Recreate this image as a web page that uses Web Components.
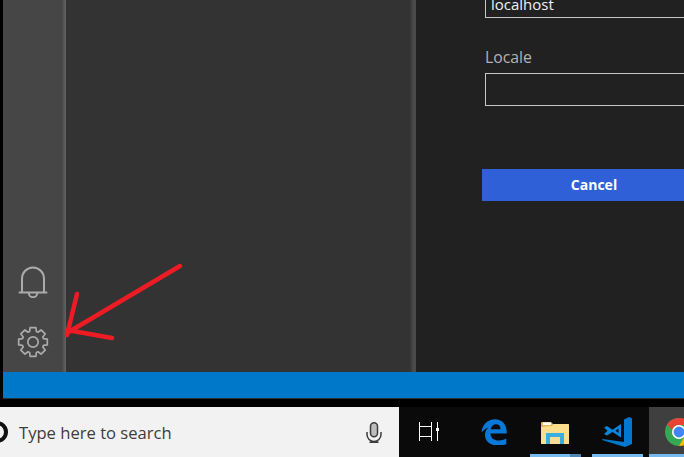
<!DOCTYPE html>
<html>
<head>
<meta charset="utf-8">
<style>
  html, body { margin: 0; height: 100%; background: #000; overflow: hidden; }
  body { font-family: "Open Sans", "Liberation Sans", sans-serif; }
</style>
</head>
<body>
<desktop-shot>
  <editor-window>
    <activity-bar>
      <bar-icon kind="bell"></bar-icon>
      <bar-icon kind="gear"></bar-icon>
    </activity-bar>
    <side-panel></side-panel>
    <settings-form>
      <form-field value="localhost"></form-field>
      <form-field label="Locale"></form-field>
      <form-button>Cancel</form-button>
    </settings-form>
  </editor-window>
  <win-taskbar>
    <task-icon kind="view"></task-icon>
    <task-icon kind="edge"></task-icon>
    <task-icon kind="folder" state="running"></task-icon>
    <task-icon kind="code" state="open"></task-icon>
    <task-icon kind="chrome" state="active"></task-icon>
  </win-taskbar>
  <red-arrow></red-arrow>
</desktop-shot>

<script>
const gearPath = () => {
  // 8 teeth, drawn around 0,0
  let pts = [];
  for (let i = 0; i < 8; i++) {
    let a = (i * Math.PI) / 4;
    [[-0.31, 11], [-0.2, 14.6], [0.2, 14.6], [0.31, 11]].forEach(([da, r]) => {
      pts.push((r * Math.sin(a + da)).toFixed(2) + " " + (-r * Math.cos(a + da)).toFixed(2));
    });
  }
  return "M" + pts.join("L") + "Z";
};

const icons = {
  bell: `<svg width="30" height="32" viewBox="0 0 30 32" fill="none" stroke="#ababab" stroke-width="2">
      <path d="M4 26V12.5a11 11 0 0 1 22 0V26"/>
      <path d="M1.5 26.5h27" stroke-linecap="round"/>
      <path d="M10.8 27a4.2 4.2 0 0 0 8.4 0"/>
    </svg>`,
  gear: `<svg width="32" height="32" viewBox="-16 -16 32 32" fill="none" stroke="#ababab" stroke-width="1.7" stroke-linejoin="round">
      <path d="${gearPath()}"/>
      <circle r="5.2"/>
    </svg>`,
  view: `<svg width="21" height="20" viewBox="0 0 21 20" fill="none" stroke="#fff" stroke-width="1">
      <path d="M.5 0v19M12.5 0v19M.5 4.5h12M.5 14.5h12"/>
      <path d="M18.5 0v19"/>
      <rect x="17" y="6" width="3" height="3" fill="#fff" stroke="none"/>
    </svg>`,
  edge: `<svg width="26" height="26" viewBox="0 0 26 26">
      <path fill="#0a78d7" d="M.5 13.5C1.2 5.5 7 .3 14 .3c7.2 0 12 5.2 11.8 14.2H9.500c.3 5 4 7 8.200 7 3 0 5.400-.7 7.600-2v5.400c-2.400 1.200-5 1.700-8.200 1.700C9 26.600 3.800 22 4 15.700c0-3 1.300-5.400 3.700-7.400-3 1.300-5.400 3.200-7.200 5.200zM9.700 10.200h9.800c0-3.200-1.700-5-4.500-5-2.800 0-4.800 2-5.300 5z"/>
    </svg>`,
  folder: `<svg width="28" height="23" viewBox="0 0 28 23">
      <path fill="#e3b95a" d="M0 2a1 1 0 0 1 1-1h9l2 2h15a1 1 0 0 1 1 1v18a1 1 0 0 1-1 1H1a1 1 0 0 1-1-1z"/>
      <path fill="#fcdf8c" d="M0 6l11-1 2-2h14a1 1 0 0 1 1 1v18a1 1 0 0 1-1 1H1a1 1 0 0 1-1-1z"/>
      <rect x="2" y="1.5" width="8" height="2.5" fill="#fff"/>
      <path fill="#3baee0" d="M5 12h18v11h-4v-7H9v7H5z"/>
      <rect x="9" y="16" width="10" height="7" fill="#f6dc95"/>
    </svg>`,
  code: `<svg width="30" height="30" viewBox="0 0 30 30">
      <path fill="#0078cf" d="M22 2.500L27 0l3 1.500V27l-7 3L0 23l.5-1L22 25z"/>
      <path fill="#0a84dc" fill-rule="evenodd" d="M2 10.500L5 9l5.500 3.800L19 7v13.500L10.500 15 5 18.500 2 17l3.500-3.200zM13.500 13.800l3 2.200v-4.500z"/>
    </svg>`,
  chrome: `<svg width="28" height="28" viewBox="0 0 36 36">
      <circle cx="18" cy="18" r="18" fill="#34a853"/>
      <path fill="#ea4335" d="M18 0a18 18 0 0 1 15.600 9H18a9 9 0 0 0-8.700 6.800L2.700 8.500A18 18 0 0 1 18 0z"/>
      <path fill="#fbbc05" d="M33.600 9A18 18 0 0 1 18 36l7.800-13.500A9 9 0 0 0 26 9z"/>
      <circle cx="18" cy="18" r="9" fill="#fff"/>
      <circle cx="18" cy="18" r="7" fill="#4285f4"/>
    </svg>`
};

class DesktopShot extends HTMLElement {
  constructor() {
    super();
    this.attachShadow({ mode: "open" }).innerHTML = `
      <style>
        :host { display: flex; flex-direction: column; position: relative; width: 684px; height: 457px; overflow: hidden; background: #000; }
      </style>
      <slot></slot>`;
  }
}

class EditorWindow extends HTMLElement {
  constructor() {
    super();
    this.attachShadow({ mode: "open" }).innerHTML = `
      <style>
        :host { display: flex; flex-direction: column; height: 399px; margin-left: 3px; margin-bottom: 8px; background: #212121; flex: none; }
        .main { display: flex; height: 372px; overflow: hidden; }
        .status { height: 26px; background: #0078c9; border-bottom: 1px solid #23303a; }
      </style>
      <div class="main"><slot></slot></div>
      <div class="status"></div>`;
  }
}

class ActivityBar extends HTMLElement {
  constructor() {
    super();
    this.attachShadow({ mode: "open" }).innerHTML = `
      <style>
        :host {
          display: flex; flex-direction: column; justify-content: flex-end; align-items: center;
          box-sizing: border-box; flex: none; width: 63px; height: 372px;
          padding-right: 3px; padding-bottom: 14px; gap: 28px;
          background: linear-gradient(90deg, #464646 0, #464646 59px, #505050 60px, #5c5c5c 62px, #646464 63px);
        }
      </style>
      <slot></slot>`;
  }
}

class BarIcon extends HTMLElement {
  constructor() {
    super();
    this.attachShadow({ mode: "open" }).innerHTML = `
      <style>
        :host { display: flex; width: 32px; height: 32px; justify-content: center; align-items: center; }
        svg { display: block; }
      </style>
      ${icons[this.getAttribute("kind")]}`;
  }
}

class SidePanel extends HTMLElement {
  constructor() {
    super();
    this.attachShadow({ mode: "open" }).innerHTML = `
      <style>
        :host {
          display: block; flex: none; width: 350px; height: 372px;
          background: linear-gradient(90deg, #333 0, #333 343px, #3a3a3a 345px, #4a4a4a 347px, #4a4a4a 350px);
        }
      </style>`;
  }
}

class SettingsForm extends HTMLElement {
  constructor() {
    super();
    this.attachShadow({ mode: "open" }).innerHTML = `
      <style>
        :host {
          display: flex; flex-direction: column; flex: 1; min-width: 0; overflow: hidden;
          height: 372px; box-sizing: border-box; padding-left: 69px; background: #212121;
        }
        .inner { display: flex; flex-direction: column; width: 220px; margin-top: -15px; }
        ::slotted(form-field) { margin-bottom: 29px; }
        ::slotted(form-button) { margin-top: 34px; margin-left: -3px; }
      </style>
      <div class="inner"><slot></slot></div>`;
  }
}

class FormField extends HTMLElement {
  constructor() {
    super();
    let label = this.getAttribute("label");
    this.attachShadow({ mode: "open" }).innerHTML = `
      <style>
        :host { display: block; }
        label { display: block; color: #b3b3b3; font-size: 15.8px; line-height: 20px; margin-bottom: 6px; }
        .box {
          box-sizing: border-box; height: 33px; width: 220px; padding: 0 5px;
          border: 1px solid #c8c8c8; color: #f0f0f0; font-size: 15px; line-height: 36px; white-space: nowrap;
          overflow: hidden;
        }
      </style>
      ${label ? `<label>${label}</label>` : ""}
      <div class="box">${this.getAttribute("value") || ""}</div>`;
  }
}

class FormButton extends HTMLElement {
  constructor() {
    super();
    this.attachShadow({ mode: "open" }).innerHTML = `
      <style>
        :host {
          display: block; box-sizing: border-box; width: 224px; height: 32px;
          background: #2f60d8; color: #fff; font-size: 14px; font-weight: 700;
          line-height: 32px; text-align: center;
        }
      </style>
      <slot></slot>`;
  }
}

class WinTaskbar extends HTMLElement {
  constructor() {
    super();
    this.attachShadow({ mode: "open" }).innerHTML = `
      <style>
        :host { display: flex; flex: none; height: 50px; background: #0a0a0a; }
        .search {
          display: flex; align-items: center; box-sizing: border-box; flex: none; width: 399px;
          background: #f2f2f2; color: #3c3c3c; font-size: 16.6px; overflow: hidden;
        }
        .ring {
          flex: none; box-sizing: border-box; width: 22px; height: 22px; margin-left: -14px; margin-right: 11px;
          border: 4px solid #111; border-radius: 50%;
        }
        .text { flex: 1; }
        .mic { flex: none; margin-right: 17px; display: block; }
        .icons { display: flex; flex: 1; min-width: 0; }
      </style>
      <div class="search">
        <div class="ring"></div>
        <span class="text">Type here to search</span>
        <svg class="mic" width="16" height="21" viewBox="0 0 16 21" fill="none" stroke="#3c3c3c" stroke-width="1.5">
          <rect x="4.5" y=".8" width="7" height="14" rx="3.5" fill="#bdbdbd"/>
          <path d="M1 10v2.500a7 7 0 0 0 14 0V10M8 19.500V20M3.500 20.200h9"/>
        </svg>
      </div>
      <div class="icons"><slot></slot></div>`;
  }
}

// widths and left padding of the taskbar tiles, after the search box
const tiles = {
  view: { w: 62, pad: 20 },
  edge: { w: 69, pad: 20 },
  folder: { w: 62, pad: 11 },
  code: { w: 57, pad: 10 },
  chrome: { w: 35, pad: 16 }
};

class TaskIcon extends HTMLElement {
  constructor() {
    super();
    let kind = this.getAttribute("kind");
    let t = tiles[kind];
    let state = this.getAttribute("state");
    this.attachShadow({ mode: "open" }).innerHTML = `
      <style>
        :host { display: flex; position: relative; flex: none; align-items: center; box-sizing: border-box; height: 50px; overflow: hidden; }
        svg { flex: none; display: block; }
        .line { position: absolute; left: 0; bottom: 0; height: 3px; background: #76b9ed; }
      </style>
      ${icons[kind]}
      ${state ? `<div class="line"></div>` : ""}`;
    this.style.width = t.w + "px";
    this.style.paddingLeft = t.pad + "px";
    let line = this.shadowRoot.querySelector(".line");
    if (state === "running") {
      line.style.width = "51px";
      line.style.background = "linear-gradient(90deg, #76b9ed 40px, #4f86b3 40px)";
    }
    if (state === "open") line.style.width = "51px";
    if (state === "active") {
      this.style.background = "#3f3f3f";
      line.style.width = "100%";
    }
  }
}

class RedArrow extends HTMLElement {
  constructor() {
    super();
    this.attachShadow({ mode: "open" }).innerHTML = `
      <style>
        :host { position: absolute; left: 0; top: 0; width: 684px; height: 457px; pointer-events: none; }
        svg { display: block; }
      </style>
      <svg width="684" height="457" fill="none" stroke="#ed1c24" stroke-width="4.5" stroke-linecap="round" stroke-linejoin="round">
        <path d="M180 266L67 333"/>
        <path d="M77 294L67 335"/>
        <path d="M67 330L112 338"/>
      </svg>`;
  }
}

customElements.define("desktop-shot", DesktopShot);
customElements.define("editor-window", EditorWindow);
customElements.define("activity-bar", ActivityBar);
customElements.define("bar-icon", BarIcon);
customElements.define("side-panel", SidePanel);
customElements.define("settings-form", SettingsForm);
customElements.define("form-field", FormField);
customElements.define("form-button", FormButton);
customElements.define("win-taskbar", WinTaskbar);
customElements.define("task-icon", TaskIcon);
customElements.define("red-arrow", RedArrow);
</script>
</body>
</html>
